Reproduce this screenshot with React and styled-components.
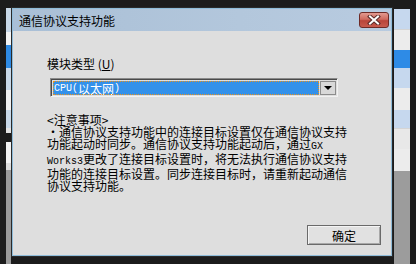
import React from 'react'
import styled, {createGlobalStyle} from 'styled-components'

const GlobalStyle = createGlobalStyle`
  html, body {
    margin: 0;
    padding: 0;
    background: #1c1c1c;
  }
  body {
    font-family: "Noto Sans CJK SC", "Noto Sans", sans-serif;
    font-size: 12px;
  }
`

const Screen = styled.div`
  display: flex;
  width: 416px;
  height: 264px;
  overflow: hidden;
  background: #1c1c1c;
`

const SidePane = styled.div`
  display: flex;
  flex-direction: column;
  width: ${(props) => props.width}px;
  margin: ${(props) => props.margin || '0'};
`

const LeftGutter = styled.div`
  display: flex;
  flex: 1;
  padding-left: 6px;
`

const BackRow = styled.div`
  height: ${(props) => props.h}px;
  flex: ${(props) => (props.fill ? 1 : 'none')};
  background: ${(props) => props.color};
  border-bottom: ${(props) => (props.line ? '1px solid #d4d4d4' : 'none')};
`

const Dialog = styled.div`
  display: flex;
  flex-direction: column;
  width: 382px;
  height: 250px;
  margin-top: 7px;
  box-sizing: border-box;
  border: 1px solid #2a2a2a;
  box-shadow: inset 0 0 0 1px #8fbcd9;
  background: #dedede;
`

const TitleBar = styled.div`
  display: flex;
  align-items: center;
  justify-content: space-between;
  height: 22px;
  padding: 0 2px 0 6px;
  margin: 1px 1px 0;
  background: linear-gradient(90deg, #a9bfd6 0%, #b3c7dc 60%, #b8cbe0 100%);
  color: #000;
  font-size: 12px;
`

const CloseButton = styled.div`
  display: flex;
  align-items: center;
  justify-content: center;
  width: 30px;
  height: 16px;
  box-sizing: border-box;
  border: 1px solid #6e2a26;
  border-radius: 3px;
  background: linear-gradient(180deg, #e39a90 0%, #cf6a5e 45%, #b9443a 55%, #c75a4e 100%);
`

const Body = styled.div`
  display: flex;
  flex: 1;
  flex-direction: column;
  padding: 26px 11px 11px 35px;
`

const Label = styled.div`
  line-height: 14px;
  color: #000;

  u {
    text-decoration: underline;
  }
`

const Half = styled.span`
  font-family: "Liberation Mono", "DejaVu Sans Mono", monospace;
  font-size: 10px;
`

const Combo = styled.div`
  display: flex;
  width: 288px;
  height: 19px;
  margin: 7px 0 0 3px;
  box-sizing: border-box;
  border-top: 1px solid #8a8a8a;
  border-left: 1px solid #8a8a8a;
  border-right: 1px solid #f2f2f2;
  border-bottom: 1px solid #f2f2f2;
  box-shadow: inset 1px 1px 0 #4a4a4a;
  padding: 2px 1px 1px 2px;
  background: #dedede;
`

const ComboValue = styled.div`
  flex: 1;
  display: flex;
  align-items: center;
  padding-left: 1px;
  background: #3391ea;
  outline: 1px dotted #e8921e;
  outline-offset: -1px;
  color: #fff;
  line-height: 13px;
`

const DropButton = styled.div`
  display: flex;
  align-items: center;
  justify-content: center;
  width: 16px;
  margin-left: 1px;
  box-sizing: border-box;
  border: 1px solid #8c8c8c;
  background: #d9d9d9;
`

const Notes = styled.div`
  margin-top: 17px;
  color: #000;
  line-height: 12px;
`

const NoteLine = styled.div`
  white-space: nowrap;
`

const Footer = styled.div`
  display: flex;
  justify-content: flex-end;
  margin-top: auto;
`

const OkButton = styled.div`
  display: flex;
  align-items: center;
  justify-content: center;
  width: 74px;
  height: 20px;
  box-sizing: border-box;
  border: 1px solid #6a6a6a;
  box-shadow: inset 1px 1px 0 #f4f4f4, inset -1px -1px 0 #a8a8a8;
  background: #e1e1e1;
  color: #000;
`

const leftRows = [
  {h: 8, color: '#1c1c1c'},
  {h: 24, color: '#c8d8e8'},
  {h: 13, color: '#f4f4f4'},
  {h: 23, color: '#2e8ae4'},
  {h: 22, color: '#c8d8e8'},
  {h: 20, color: '#f0f0f0'},
  {h: 18, color: '#c8d8e8'},
  {h: 5, color: '#e4e4e4'},
  {h: 9, color: '#1c1c1c'},
  {h: 21, color: '#f2f2f2'},
  {h: 7, color: '#dcdcdc'},
  {fill: true, color: '#9a9a9a'},
]

const rightRows = [
  {h: 9, color: '#1c1c1c'},
  {h: 20, color: '#c6d8ee', line: true},
  {h: 20, color: '#ececec'},
  {h: 18, color: '#2e8be6'},
  {h: 20, color: '#c6d8ee'},
  {h: 22, color: '#ececec'},
  {h: 18, color: '#c6d8ee', line: true},
  {h: 20, color: '#e8e8e8'},
  {h: 22, color: '#ececec'},
  {fill: true, color: '#9c9c9c'},
]

const App = () => (
  <>
    <GlobalStyle/>
    <Screen>
      <SidePane width={11}>
        <LeftGutter>
          <SidePane width={5}>
            {leftRows.map((row, i) => (
              <BackRow key={i} {...row}/>
            ))}
          </SidePane>
        </LeftGutter>
      </SidePane>
      <Dialog>
        <TitleBar>
          <span>通信协议支持功能</span>
          <CloseButton>
            <svg width="14" height="10" viewBox="0 0 14 10">
              <path
                d="M3 1.5 L11 8.5 M11 1.5 L3 8.5"
                stroke="#5a2a28"
                strokeWidth="4"
                strokeLinecap="square"
              />
              <path
                d="M3 1.5 L11 8.5 M11 1.5 L3 8.5"
                stroke="#ffffff"
                strokeWidth="2"
                strokeLinecap="square"
              />
            </svg>
          </CloseButton>
        </TitleBar>
        <Body>
          <Label>模块类型 (<u>U</u>)</Label>
          <Combo>
            <ComboValue>
              <Half>CPU(</Half>以太网<Half>)</Half>
            </ComboValue>
            <DropButton>
              <svg width="8" height="4" viewBox="0 0 8 4">
                <path d="M0 0 H8 L4 4 Z" fill="#000"/>
              </svg>
            </DropButton>
          </Combo>
          <Notes>
            <NoteLine>&lt;注意事项&gt;</NoteLine>
            <NoteLine>・通信协议支持功能中的连接目标设置仅在通信协议支持</NoteLine>
            <NoteLine>功能起动时同步。通信协议支持功能起动后，通过<Half>GX</Half></NoteLine>
            <NoteLine><Half>Works3</Half>更改了连接目标设置时，将无法执行通信协议支持</NoteLine>
            <NoteLine>功能的连接目标设置。同步连接目标时，请重新起动通信</NoteLine>
            <NoteLine>协议支持功能。</NoteLine>
          </Notes>
          <Footer>
            <OkButton>确定</OkButton>
          </Footer>
        </Body>
      </Dialog>
      <SidePane width={16} margin="0 0 0 1px">
        {rightRows.map((row, i) => (
          <BackRow key={i} {...row}/>
        ))}
      </SidePane>
    </Screen>
  </>
)

export default App
